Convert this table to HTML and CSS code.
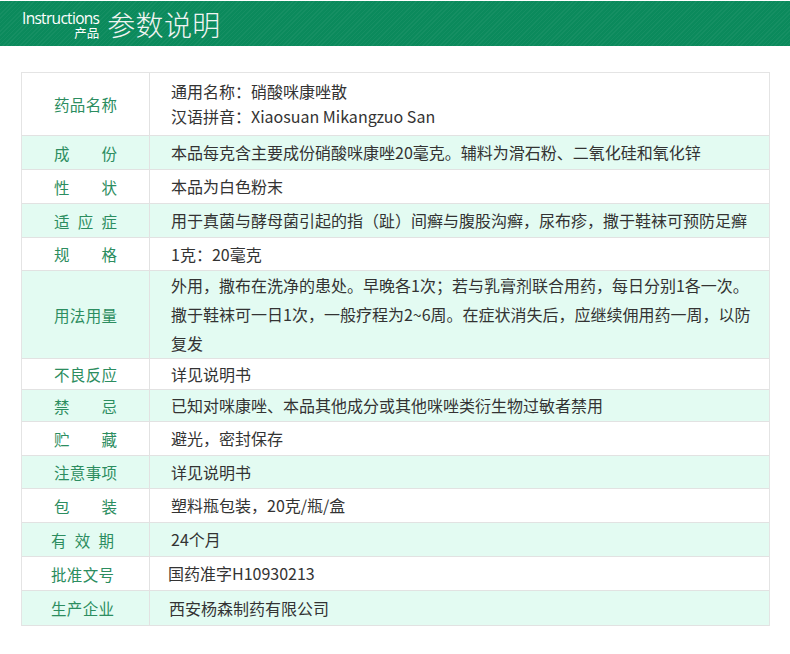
FILE: index.html
```html
<!DOCTYPE html>
<html lang="zh-CN">
<head>
<meta charset="utf-8">
<title>产品参数说明</title>
<link rel="stylesheet" href="styles.css">
</head>
<body>
<header class="banner">
  <div class="banner-small">
    <span class="en">Instructions</span>
    <span class="cn">产品</span>
  </div>
  <div class="banner-title">参数说明</div>
</header>

<div class="table">
  <div class="row r-name">
    <div class="label"><span>药品名称</span></div>
    <div class="value">通用名称：硝酸咪康唑散<br>汉语拼音：Xiaosuan Mikangzuo San</div>
  </div>
  <div class="row alt">
    <div class="label"><span>成份</span></div>
    <div class="value">本品每克含主要成份硝酸咪康唑20毫克。辅料为滑石粉、二氧化硅和氧化锌</div>
  </div>
  <div class="row">
    <div class="label"><span>性状</span></div>
    <div class="value">本品为白色粉末</div>
  </div>
  <div class="row alt">
    <div class="label"><span>适应症</span></div>
    <div class="value">用于真菌与酵母菌引起的指（趾）间癣与腹股沟癣，尿布疹，撒于鞋袜可预防足癣</div>
  </div>
  <div class="row short">
    <div class="label"><span>规格</span></div>
    <div class="value">1克：20毫克</div>
  </div>
  <div class="row alt multi">
    <div class="label"><span>用法用量</span></div>
    <div class="value">外用，撒布在洗净的患处。早晚各1次；若与乳膏剂联合用药，每日分别1各一次。<br>撒于鞋袜可一日1次，一般疗程为2~6周。在症状消失后，应继续佣用药一周，以防复发</div>
  </div>
  <div class="row tight">
    <div class="label"><span>不良反应</span></div>
    <div class="value">详见说明书</div>
  </div>
  <div class="row alt tight2">
    <div class="label"><span>禁忌</span></div>
    <div class="value">已知对咪康唑、本品其他成分或其他咪唑类衍生物过敏者禁用</div>
  </div>
  <div class="row">
    <div class="label"><span>贮藏</span></div>
    <div class="value">避光，密封保存</div>
  </div>
  <div class="row alt short">
    <div class="label"><span>注意事项</span></div>
    <div class="value">详见说明书</div>
  </div>
  <div class="row">
    <div class="label"><span>包装</span></div>
    <div class="value">塑料瓶包装，20克/瓶/盒</div>
  </div>
  <div class="row alt">
    <div class="label shift"><span>有效期</span></div>
    <div class="value">24个月</div>
  </div>
  <div class="row">
    <div class="label shift"><span>批准文号</span></div>
    <div class="value inset">国药准字H10930213</div>
  </div>
  <div class="row alt last">
    <div class="label shift"><span>生产企业</span></div>
    <div class="value inset2">西安杨森制药有限公司</div>
  </div>
</div>
</body>
</html>
```

FILE: styles.css
```css
html, body {
  margin: 0;
  padding: 0;
  background: #ffffff;
}

body {
  width: 790px;
  font-family: "Noto Sans CJK SC", "Noto Sans", sans-serif;
  text-spacing-trim: space-all;
}

.banner {
  margin-top: 1px;
  height: 45px;
  display: flex;
  align-items: center;
  padding-left: 22px;
  background-color: #0b8a5c;
  background-image: repeating-linear-gradient(135deg, rgba(255,255,255,0.045) 0 1px, rgba(0,0,0,0) 1px 3px);
  box-sizing: border-box;
}

.banner-small {
  display: flex;
  flex-direction: column;
  align-items: flex-end;
  color: #ffffff;
  margin-top: 2px;
}

.banner-small .en {
  font-family: "Open Sans", "Noto Sans", sans-serif;
  font-size: 15.5px;
  letter-spacing: -0.7px;
  line-height: 15px;
}

.banner-small .cn {
  font-size: 12.5px;
  line-height: 13px;
}

.banner-title {
  margin-left: 8px;
  font-size: 28px;
  line-height: 32px;
  color: #f0f4f2;
  font-weight: 300;
  letter-spacing: 0.3px;
}

.table {
  margin: 26px 0 0 21px;
  width: 749px;
  border: 1px solid #e4e4e4;
  border-bottom: none;
  box-sizing: border-box;
}

.row {
  display: grid;
  grid-template-columns: 128px 1fr;
  border-bottom: 1px solid #e2e2e2;
  background: #ffffff;
  min-height: 33px;
}

.row.alt {
  background: #e3fbf2;
}

.label {
  display: flex;
  align-items: center;
  justify-content: center;
  border-right: 1px solid #e2e2e2;
  color: #2c8d60;
  font-size: 15.5px;
}

.label span {
  display: block;
  width: 63px;
  text-align: justify;
  text-align-last: justify;
  line-height: 20px;
}

.label.shift span {
  margin-left: -6px;
}

.value {
  display: flex;
  align-items: center;
  padding: 0 16px 0 21px;
  color: #333333;
  font-size: 16px;
  line-height: 29px;
}

.r-name .value {
  display: block;
  line-height: 25px;
  padding-top: 6px;
  padding-bottom: 6px;
}

.row.short {
  min-height: 32px;
}

.row.multi .value {
  display: block;
  line-height: 29px;
  padding-top: 0;
  padding-bottom: 0;
  padding-right: 18px;
}

.row.tight {
  min-height: 30px;
}

.row.tight2 {
  min-height: 31px;
}

.row.last {
  min-height: 34px;
}

.value.inset {
  padding-left: 18px;
}

.value.inset2 {
  padding-left: 19px;
}
```
